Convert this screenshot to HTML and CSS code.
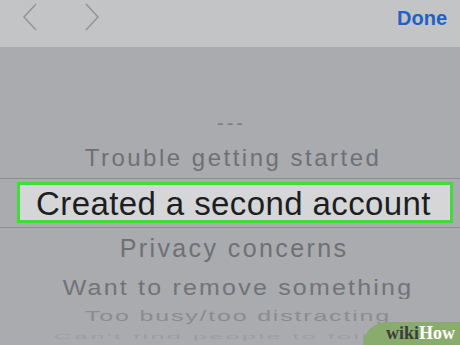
FILE: index.html
```html
<!DOCTYPE html>
<html>
<head>
<meta charset="utf-8">
<link rel="stylesheet" href="styles.css">
</head>
<body>
<div class="screen">
  <div class="toolbar">
    <div class="nav">
      <svg class="chev" width="120" height="34" viewBox="0 0 120 34">
        <polyline points="36,4 24,17 36,30" />
        <polyline points="86,4 98,17 86,30" />
      </svg>
    </div>
    <div class="done">Done</div>
  </div>
  <div class="picker">
    <div class="row dashes">---</div>
    <div class="row trouble">Trouble getting started</div>
    <div class="selected">
      <div class="box">Created a second account</div>
    </div>
    <div class="row privacy">Privacy concerns</div>
    <div class="row want"><span>Want to remove something</span></div>
    <div class="row busy"><span>Too busy/too distracting</span></div>
    <div class="row cant"><span>Can't find people to follow</span></div>
  </div>
  <div class="badge"><span class="wiki">wiki</span><span class="how">How</span></div>
</div>
</body>
</html>
```
FILE: styles.css
```css
html, body {
  margin: 0;
  padding: 0;
}
body {
  width: 460px;
  height: 345px;
  overflow: hidden;
  font-family: "Liberation Sans", Arial, sans-serif;
}
.screen {
  position: relative;
  width: 460px;
  height: 345px;
  overflow: hidden;
  background: #a9abaf;
  display: flex;
  flex-direction: column;
}
.toolbar {
  height: 47px;
  background: #c3c4c6;
  display: flex;
  justify-content: space-between;
  align-items: flex-start;
  flex-shrink: 0;
}
.chev {
  display: block;
}
.chev polyline {
  fill: none;
  stroke: #939498;
  stroke-width: 1.5;
}
.done {
  font-weight: bold;
  font-size: 20px;
  color: #1f62c5;
  margin: 7px 13px 0 0;
}
.picker {
  display: flex;
  flex-direction: column;
  align-items: stretch;
  padding-top: 63px;
}
.row {
  text-align: center;
  white-space: nowrap;
  color: #6f7074;
  overflow: hidden;
}
.dashes {
  height: 28px;
  line-height: 26px;
  font-size: 20px;
  letter-spacing: 3px;
  text-indent: 3px;
  color: #7c7d81;
}
.trouble {
  height: 40px;
  line-height: 40px;
  font-size: 24px;
  letter-spacing: 2.5px;
  text-indent: 6px;
  border-bottom: 1px solid #8e8f93;
}
.selected {
  height: 49px;
  padding: 3px 7px 5px 17px;
  box-sizing: border-box;
  background: #a9abaf;
  border-bottom: 1px solid #8e8f93;
}
.box {
  height: 41px;
  box-sizing: border-box;
  border: 3px solid #3fdc3c;
  background: #d5d6d8;
  color: #1d1e22;
  font-size: 33px;
  letter-spacing: 0.4px;
  line-height: 37px;
  text-align: center;
  white-space: nowrap;
  padding-right: 3px;
}
.privacy {
  height: 40px;
  line-height: 40px;
  font-size: 25px;
  letter-spacing: 2.4px;
  text-indent: 8px;
}
.want {
  height: 38px;
  line-height: 38px;
  font-size: 25px;
  letter-spacing: 2.2px;
  text-indent: 8px;
  color: #727377;
}
.want span {
  display: inline-block;
  transform: scaleY(0.85);
}
.busy {
  height: 20px;
  line-height: 20px;
  font-size: 25px;
  letter-spacing: 1.8px;
  text-indent: 8px;
  color: #8b8c90;
}
.busy span {
  display: inline-block;
  transform: scaleY(0.55);
}
.cant {
  height: 20px;
  line-height: 20px;
  font-size: 25px;
  letter-spacing: 2.5px;
  color: #9c9da1;
  padding-right: 0;
}
.cant span {
  display: inline-block;
  transform: scaleY(0.32);
}
.badge {
  position: absolute;
  right: 0;
  bottom: 0;
  width: 97px;
  height: 23px;
  background: #8aab6e;
  border-top-left-radius: 24px 23px;
  font-family: "Liberation Serif", serif;
  font-weight: bold;
  font-size: 18px;
  line-height: 23px;
  text-align: right;
  padding-right: 5px;
  box-sizing: border-box;
}
.wiki {
  color: #3b3d3a;
}
.how {
  color: #ffffff;
}
```
